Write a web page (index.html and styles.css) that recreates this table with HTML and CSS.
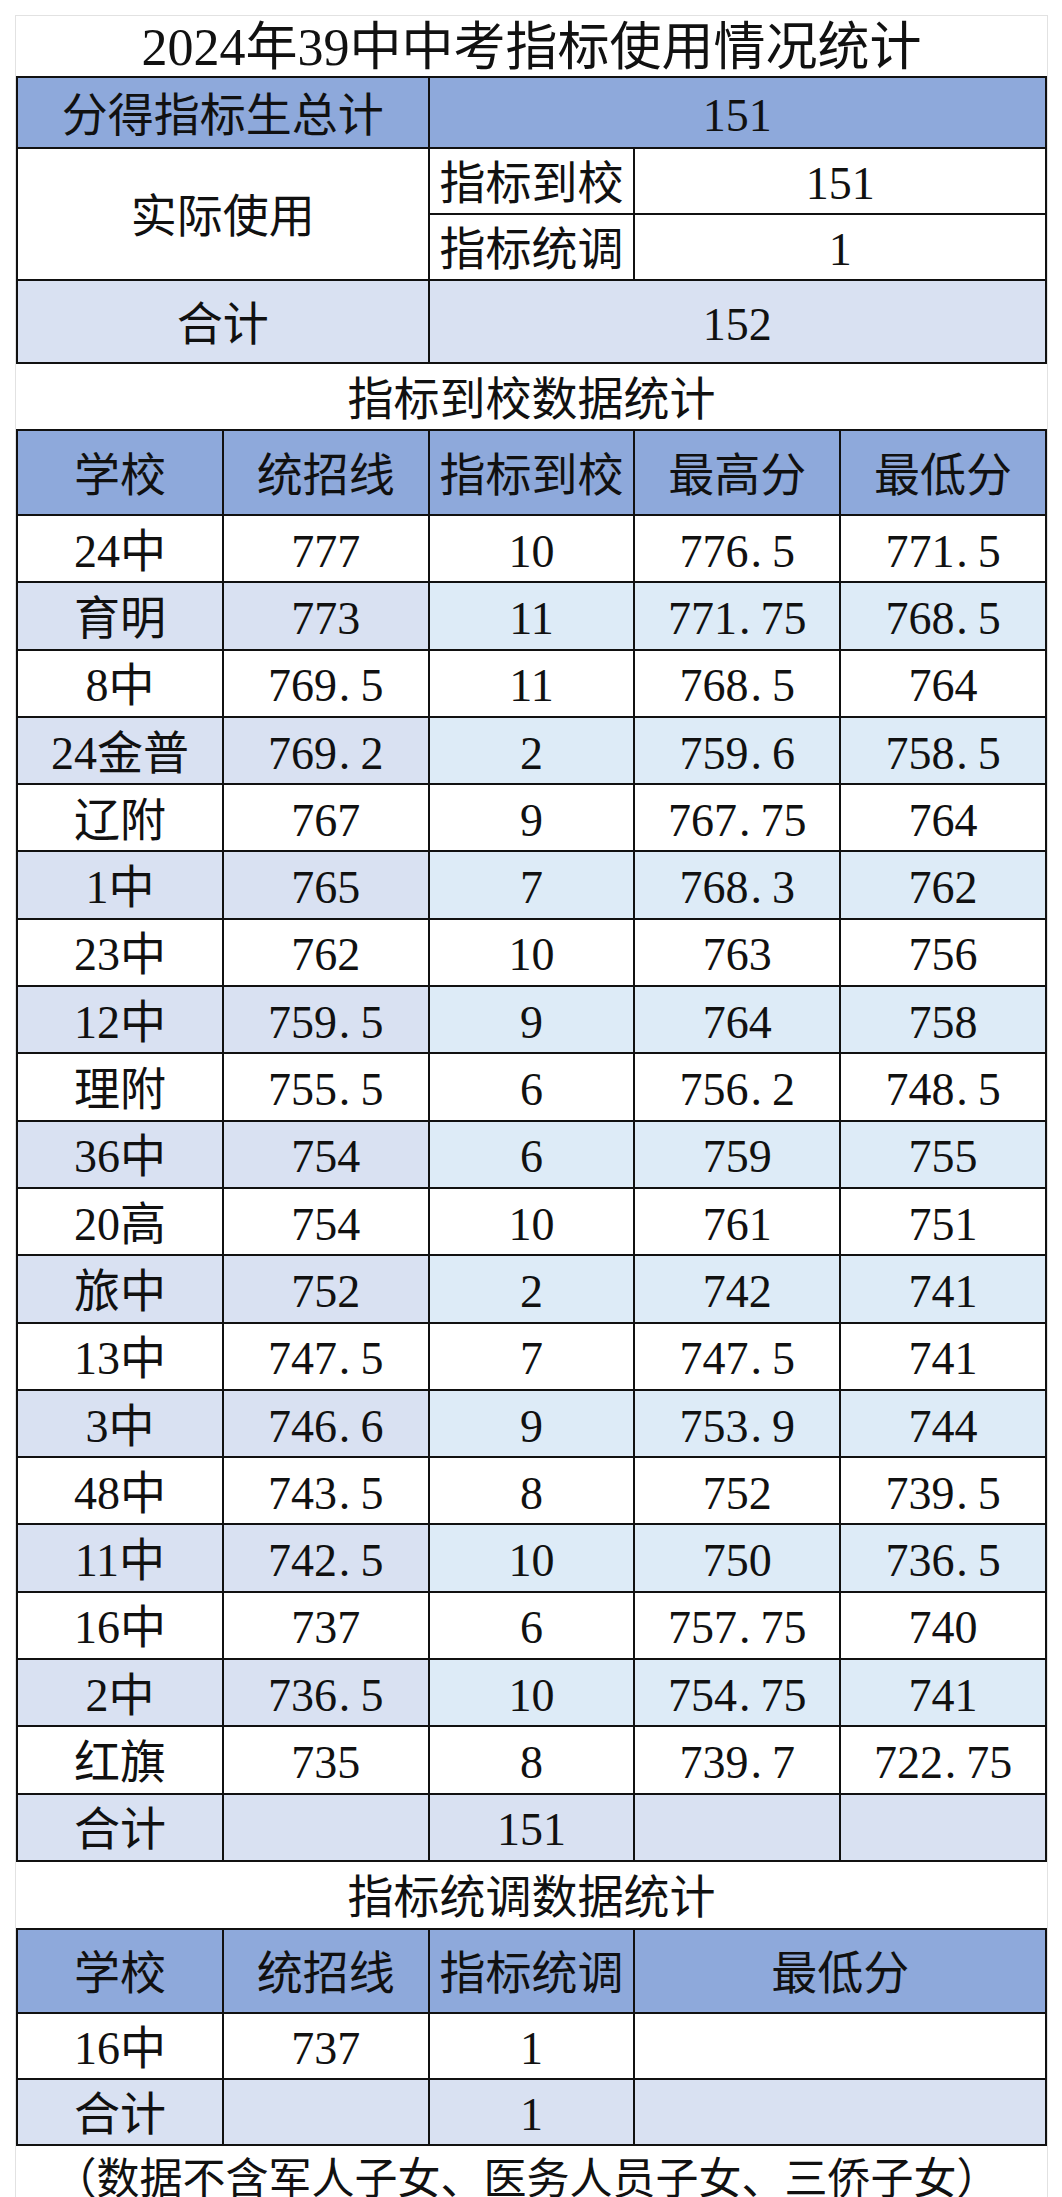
FILE: index.html
```html
<!DOCTYPE html>
<html lang="zh-CN">
<head>
<meta charset="utf-8">
<title>2024年39中中考指标使用情况统计</title>
<link rel="stylesheet" href="styles.css">
</head>
<body>
<div class="card">
  <div class="title main">2024年39中中考指标使用情况统计</div>

  <div class="grid summary">
    <div class="c hdr span2">分得指标生总计</div>
    <div class="c hdr span3">151</div>
    <div class="c span2 rspan2">实际使用</div>
    <div class="c">指标到校</div>
    <div class="c span2">151</div>
    <div class="c">指标统调</div>
    <div class="c span2">1</div>
    <div class="c tot span2">合计</div>
    <div class="c tot span3">152</div>
  </div>

  <div class="title sub">指标到校数据统计</div>

  <div class="grid data">
    <div class="row head"><div class="c">学校</div><div class="c">统招线</div><div class="c">指标到校</div><div class="c">最高分</div><div class="c">最低分</div></div>
    <div class="row"><div class="c">24中</div><div class="c">777</div><div class="c">10</div><div class="c">776<span class="dot">.</span>5</div><div class="c">771<span class="dot">.</span>5</div></div>
    <div class="row stripe"><div class="c">育明</div><div class="c">773</div><div class="c">11</div><div class="c">771<span class="dot">.</span>75</div><div class="c">768<span class="dot">.</span>5</div></div>
    <div class="row"><div class="c">8中</div><div class="c">769<span class="dot">.</span>5</div><div class="c">11</div><div class="c">768<span class="dot">.</span>5</div><div class="c">764</div></div>
    <div class="row stripe"><div class="c">24金普</div><div class="c">769<span class="dot">.</span>2</div><div class="c">2</div><div class="c">759<span class="dot">.</span>6</div><div class="c">758<span class="dot">.</span>5</div></div>
    <div class="row"><div class="c">辽附</div><div class="c">767</div><div class="c">9</div><div class="c">767<span class="dot">.</span>75</div><div class="c">764</div></div>
    <div class="row stripe"><div class="c">1中</div><div class="c">765</div><div class="c">7</div><div class="c">768<span class="dot">.</span>3</div><div class="c">762</div></div>
    <div class="row"><div class="c">23中</div><div class="c">762</div><div class="c">10</div><div class="c">763</div><div class="c">756</div></div>
    <div class="row stripe"><div class="c">12中</div><div class="c">759<span class="dot">.</span>5</div><div class="c">9</div><div class="c">764</div><div class="c">758</div></div>
    <div class="row"><div class="c">理附</div><div class="c">755<span class="dot">.</span>5</div><div class="c">6</div><div class="c">756<span class="dot">.</span>2</div><div class="c">748<span class="dot">.</span>5</div></div>
    <div class="row stripe"><div class="c">36中</div><div class="c">754</div><div class="c">6</div><div class="c">759</div><div class="c">755</div></div>
    <div class="row"><div class="c">20高</div><div class="c">754</div><div class="c">10</div><div class="c">761</div><div class="c">751</div></div>
    <div class="row stripe"><div class="c">旅中</div><div class="c">752</div><div class="c">2</div><div class="c">742</div><div class="c">741</div></div>
    <div class="row"><div class="c">13中</div><div class="c">747<span class="dot">.</span>5</div><div class="c">7</div><div class="c">747<span class="dot">.</span>5</div><div class="c">741</div></div>
    <div class="row stripe"><div class="c">3中</div><div class="c">746<span class="dot">.</span>6</div><div class="c">9</div><div class="c">753<span class="dot">.</span>9</div><div class="c">744</div></div>
    <div class="row"><div class="c">48中</div><div class="c">743<span class="dot">.</span>5</div><div class="c">8</div><div class="c">752</div><div class="c">739<span class="dot">.</span>5</div></div>
    <div class="row stripe"><div class="c">11中</div><div class="c">742<span class="dot">.</span>5</div><div class="c">10</div><div class="c">750</div><div class="c">736<span class="dot">.</span>5</div></div>
    <div class="row"><div class="c">16中</div><div class="c">737</div><div class="c">6</div><div class="c">757<span class="dot">.</span>75</div><div class="c">740</div></div>
    <div class="row stripe"><div class="c">2中</div><div class="c">736<span class="dot">.</span>5</div><div class="c">10</div><div class="c">754<span class="dot">.</span>75</div><div class="c">741</div></div>
    <div class="row"><div class="c">红旗</div><div class="c">735</div><div class="c">8</div><div class="c">739<span class="dot">.</span>7</div><div class="c">722<span class="dot">.</span>75</div></div>
    <div class="row total"><div class="c">合计</div><div class="c"></div><div class="c">151</div><div class="c"></div><div class="c"></div></div>
  </div>

  <div class="title sub sub2">指标统调数据统计</div>

  <div class="grid adj">
    <div class="row head"><div class="c">学校</div><div class="c">统招线</div><div class="c">指标统调</div><div class="c span2">最低分</div></div>
    <div class="row"><div class="c">16中</div><div class="c">737</div><div class="c">1</div><div class="c span2"></div></div>
    <div class="row total"><div class="c">合计</div><div class="c"></div><div class="c">1</div><div class="c span2"></div></div>
  </div>

  <div class="note">（数据不含军人子女、医务人员子女、三侨子女）</div>
</div>
</body>
</html>
```

FILE: styles.css
```css
html, body {
  margin: 0;
  padding: 0;
  background: #ffffff;
}

body {
  font-family: "Liberation Serif", "Noto Sans CJK SC", serif;
  color: #111111;
}

.card {
  margin: 15px 0 0 15px;
  width: 1031px;
  min-height: 2200px;
  border: 1px solid #e2e2e2;
  border-bottom: 0;
  background: #ffffff;
}

.title {
  height: 65px;
  box-sizing: border-box;
  display: flex;
  align-items: center;
  justify-content: center;
  font-size: 46px;
  font-weight: 400;
  padding-top: 6px;
  line-height: 1;
}

.title.main {
  height: 60px;
  font-size: 52px;
  padding-top: 4px;
}

.title.sub2 {
  height: 66px;
}

.grid {
  display: grid;
  grid-template-columns: repeat(5, 1fr);
  gap: 2px;
  padding: 2px;
  background: #111111;
}

.summary {
  grid-template-rows: 69px 64px 64px 81px;
}

.data {
  grid-template-rows: 83px repeat(20, 65.3px);
}

.adj {
  grid-template-rows: 82px 64px 64px;
}

.row {
  display: contents;
}

.c {
  background: #ffffff;
  display: flex;
  align-items: center;
  justify-content: center;
  font-size: 46px;
  line-height: 1;
  padding-top: 6px;
  box-sizing: border-box;
  white-space: nowrap;
}

.span2 {
  grid-column: span 2;
}

.span3 {
  grid-column: span 3;
}

.rspan2 {
  grid-row: span 2;
}

.hdr,
.head > .c {
  background: #8ea9db;
}

.tot,
.total > .c {
  background: #d9e1f2;
}

.stripe > .c {
  background: #ddebf7;
}

.stripe > .c:nth-child(-n+2) {
  background: #d9e1f2;
}

.dot {
  margin: 0 0.22em 0 0.04em;
}

.note {
  text-align: center;
  font-size: 43px;
  line-height: 1.2;
  padding-top: 8px;
  padding-right: 10px;
}
```
